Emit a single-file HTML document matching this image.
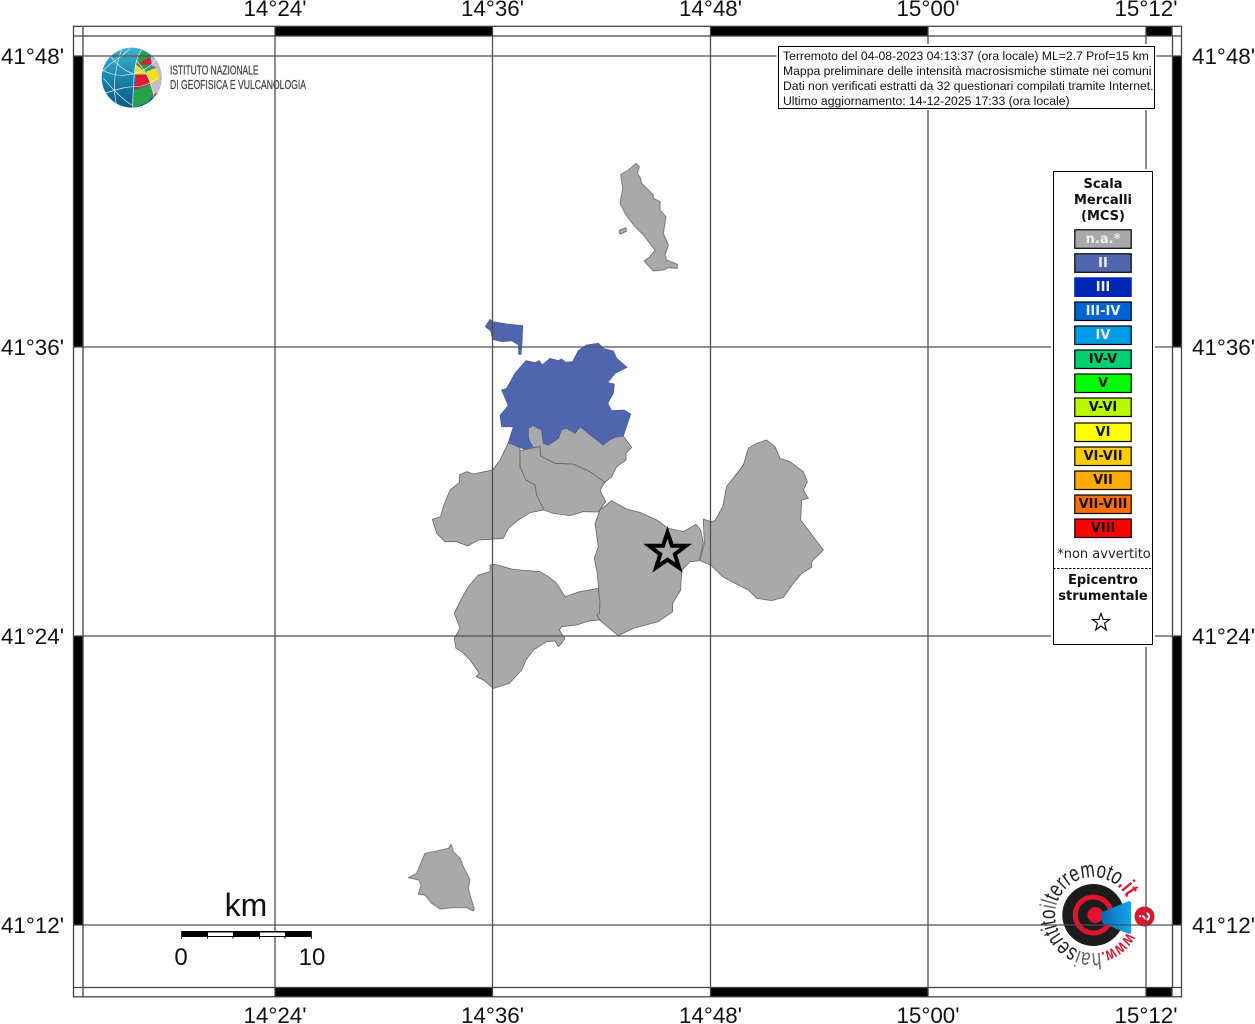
<!DOCTYPE html>
<html lang="it"><head><meta charset="utf-8"><title>Mappa</title>
<style>
html,body{margin:0;padding:0;background:#fff;overflow:hidden}
svg{display:block}
.ax{font:22.4px "Liberation Sans",sans-serif;fill:#111}
.lg{font:bold 13px "DejaVu Sans",sans-serif;text-anchor:middle}
.tb{font:12.2px "Liberation Sans",sans-serif;fill:#111}
</style></head><body>
<svg width="1255" height="1024" viewBox="0 0 1255 1024" xmlns="http://www.w3.org/2000/svg">
<defs>
<linearGradient id="gb" x1="0" y1="0" x2="0" y2="1"><stop offset="0" stop-color="#43b4d0"/><stop offset=".55" stop-color="#1680a8"/><stop offset="1" stop-color="#0c5580"/></linearGradient>
<linearGradient id="cone" x1="0" y1="0" x2="1" y2="0"><stop offset="0" stop-color="#0a66b8"/><stop offset="1" stop-color="#12a8ea"/></linearGradient>
<filter id="soft" x="-5%" y="-5%" width="110%" height="110%"><feGaussianBlur stdDeviation="0.35"/></filter>
<clipPath id="gc"><circle cx="215" cy="188" r="90"/></clipPath>
<clipPath id="tc"><rect x="779" y="47" width="375" height="61"/></clipPath>
<path id="cir" d="M1127 932.200A38 38 0 1 1 1127.500 899"/>
</defs>

<!-- INGV logo -->
<g transform="translate(60,15) scale(.33333)">
<g clip-path="url(#gc)">
<rect x="120" y="95" width="190" height="190" fill="url(#gb)"/>
<path d="M228 135L245 105 272 122 232 150Z" fill="#2f9e44"/>
<path d="M232 150L270 125 276 152 250 155Z" fill="#d81e3a"/>
<path d="M225 145L255 172 258 178 225 178Z" fill="#f2e21a"/>
<path d="M240 148L276 152 255 170Z" fill="#2f9e44"/>
<path d="M258 170L290 158 300 190 272 208Z" fill="#efe020"/>
<path d="M222 222L228 180 258 178 272 208Z" fill="#dc1c34"/>
<path d="M220 225L272 208 282 238 262 262 218 280Z" fill="#27a04c"/>
<path d="M272 122L310 150 310 195 298 190 290 158 276 152Z" fill="#c9b9cc"/>
<path d="M272 208L300 190 310 200 290 245 282 238Z" fill="#c9b9cc"/>
<path d="M282 238L292 232 280 250Z" fill="#d81e3a"/>
<g fill="none" stroke="#e8f3f6" stroke-width="2">
<path d="M128 165C160 185 200 185 240 170 265 160 285 140 290 130"/>
<path d="M135 235C165 225 195 215 225 215 250 215 270 205 295 190"/>
<path d="M150 120C165 145 195 170 225 178"/>
<path d="M185 103C175 130 170 150 165 185 160 215 165 250 170 272"/>
<path d="M245 105C225 130 222 175 220 225 218 250 218 265 218 282"/>
<path d="M130 190C150 210 170 240 215 270"/>
<path d="M210 100C190 125 150 140 128 170"/>
<path d="M228 135C245 155 265 180 272 208 278 225 282 240 282 250"/>
</g>
</g>
</g>
<g font-family="'Liberation Sans',sans-serif" fill="#444" stroke="#444" stroke-width=".25" font-size="12.5">
<text x="170" y="74.500" textLength="88.500" lengthAdjust="spacingAndGlyphs">ISTITUTO NAZIONALE</text>
<text x="170" y="89" textLength="136" lengthAdjust="spacingAndGlyphs">DI GEOFISICA E VULCANOLOGIA</text>
</g>

<!-- regions -->
<g stroke="#666" stroke-width="2.400" stroke-linejoin="round" filter="url(#soft)">
<g transform="translate(420,310) scale(.33333)" fill="#a9a9a9">
<path d="M265 398L300 413 300 470 318 510 345 525 350 555 372 600 330 608 295 630 265 655 250 685 210 688 175 690 143 708 110 695 75 695 50 670 37 628 62 620 70 590 90 540 118 518 118 495 140 485 160 492 218 480 240 450Z"/>
<path d="M300 422L360 410 362 438 405 460 460 462 510 485 555 517 540 540 557 575 535 606 490 605 450 617 400 610 372 600 350 555 345 525 318 510 300 470Z"/>
<path d="M325 355L340 347 365 360 370 400 385 405 415 385 425 358 440 355 465 370 480 350 550 405 568 390 590 380 610 378 635 412 618 430 618 450 590 470 575 500 555 517 510 485 460 462 405 460 362 438 360 410 338 412 325 385Z"/>
</g>
<g transform="translate(420,310) scale(.33333)" fill="#5066ae" stroke="#4a5f9f">
<path d="M318 152L345 158 358 152 366 165 390 145 415 152 425 147 437 157 458 155 475 122 500 105 535 100 550 115 580 123 590 145 621 172 585 190 563 218 583 222 580 250 563 280 575 302 612 300 632 312 610 378 590 380 568 390 550 405 480 350 465 370 440 355 425 358 415 385 385 405 370 400 365 360 340 347 325 355 325 385 338 412 315 418 265 398 280 350 245 350 240 316 265 287 245 240 260 235 285 190Z"/>
<path d="M210 28L218 35 260 42 308 47 306 100 303 133 296 133 296 105 275 92 245 95 218 88 212 62 196 50Z"/>
</g>
<g transform="translate(590,430) scale(.33333)" fill="#a9a9a9">
<path d="M65 212L110 237 150 247 200 270 235 295 280 305 318 283 332 300 340 340 327 392 300 395 275 422 272 480 248 520 248 545 205 575 130 595 85 617 40 580 20 560 30 530 22 430 13 385 25 350 15 280 30 240Z"/>
<path d="M340 267L362 275 375 272 398 230 410 170 460 105 475 55 500 40 530 30 555 50 570 85 600 95 640 125 652 155 640 180 655 205 635 210 632 270 700 360 665 395 665 412 635 430 610 460 580 502 545 512 500 505 475 480 425 455 398 440 362 405 330 392 343 340Z"/>
</g>
<g transform="translate(440,555) scale(.33333)" fill="#a9a9a9">
<path d="M150 30L165 28 215 42 240 45 300 50 325 65 350 85 375 125 420 110 475 100 480 140 478 175 470 180 480 195 450 197 410 210 365 215 358 225 375 250 365 265 355 275 345 258 320 260 280 285 258 315 245 345 208 385 160 400 130 375 108 365 118 355 90 315 65 290 48 280 43 250 60 220 43 175 65 130 85 95 115 60 150 50Z"/>
</g>
<g transform="translate(600,155) scale(.33333)" fill="#a9a9a9">
<path d="M108 25L118 35 112 55 122 70 125 85 160 120 160 130 180 140 180 165 198 185 190 235 205 270 195 300 200 315 232 328 232 340 205 338 190 345 160 348 132 318 150 305 165 285 130 240 105 215 78 180 60 145 68 100 62 58 85 45Z"/>
<path d="M58 225L78 218 80 228 62 237 58 235Z"/>
</g>
<g transform="translate(395,835) scale(.33333)" fill="#a9a9a9">
<path d="M168 28L175 50 195 70 205 95 220 125 225 135 220 160 225 180 238 222 235 228 215 218 175 218 135 222 110 205 90 180 70 178 78 150 72 135 40 128 65 115 75 90 90 55 125 48 150 42 160 40Z"/>
</g>
</g>

<!-- hai sentito logo -->
<circle cx="1093.300" cy="915" r="31" fill="#1c1c1c"/>
<circle cx="1093.300" cy="915" r="18" fill="none" stroke="#e2142d" stroke-width="5"/>
<circle cx="1095.500" cy="915" r="8" fill="#e2142d"/>
<path d="M1102 912L1129 901 1131 902 1131 933 1129 934 1102 923Z" fill="url(#cone)"/>
<circle cx="1144.500" cy="916.500" r="10" fill="#e2142d"/>
<text x="1144.500" y="922" font-family="'Liberation Sans',sans-serif" font-weight="bold" font-size="16" fill="#fff" text-anchor="middle" transform="rotate(90 1144.500 916.500)">?</text>
<text font-family="'Liberation Sans',sans-serif" font-size="23" fill="#222"><textPath href="#cir" textLength="202" lengthAdjust="spacingAndGlyphs"><tspan fill="#e2142d" font-weight="bold" font-size="18">www.</tspan><tspan fill="#666">hai</tspan>sentito<tspan fill="#666">il</tspan>terremoto<tspan fill="#e2142d" font-weight="bold">.it</tspan></textPath></text>

<!-- grid -->
<g stroke="#505050" stroke-width="1.3" fill="none">
<path d="M275 36V987M492.500 36V987M710.500 36V987M928 36V987M1146 36V987"/>
<path d="M83 56H1172M83 347H1172M83 636H1172M83 925H1172"/>
</g>

<!-- frame -->
<g fill="#000">
<rect x="275" y="26" width="217.500" height="10"/><rect x="710.500" y="26" width="217.500" height="10"/><rect x="1146" y="26" width="26" height="10"/>
<rect x="275" y="987.500" width="217.500" height="9.500"/><rect x="710.500" y="987.500" width="217.500" height="9.500"/><rect x="1146" y="987.500" width="26" height="9.500"/>
<rect x="73.500" y="56" width="9.500" height="291"/><rect x="73.500" y="636" width="9.500" height="289"/>
<rect x="1172" y="56" width="9.500" height="291"/><rect x="1172" y="636" width="9.500" height="289"/>
</g>
<g stroke="#444" stroke-width="1.3" fill="none">
<rect x="73.500" y="26.300" width="1108" height="970.500"/>
<rect x="83" y="36" width="1089.500" height="951.500"/>
<path d="M73.500 36H83M73.500 987.500H83M1172 36H1181.500M1172 987.500H1181.500M83 26V36M83 987V997M1172 26V36M1172 987V997"/>
<path d="M73.500 56H83M73.500 347H83M73.500 636H83M73.500 925H83M1172 56H1181.500M1172 347H1181.500M1172 636H1181.500M1172 925H1181.500M275 26V36M492.500 26V36M710.500 26V36M928 26V36M1146 26V36M275 987V997M492.500 987V997M710.500 987V997M928 987V997M1146 987V997"/>
</g>

<!-- axis labels -->
<g text-anchor="middle">
<text class="ax" x="275" y="16">14°24'</text><text class="ax" x="492.500" y="16">14°36'</text><text class="ax" x="710.500" y="16">14°48'</text><text class="ax" x="928" y="16">15°00'</text><text class="ax" x="1146" y="16">15°12'</text>
<text class="ax" x="275" y="1023">14°24'</text><text class="ax" x="492.500" y="1023">14°36'</text><text class="ax" x="710.500" y="1023">14°48'</text><text class="ax" x="928" y="1023">15°00'</text><text class="ax" x="1146" y="1023">15°12'</text>
</g>
<g text-anchor="end">
<text class="ax" x="64" y="64">41°48'</text><text class="ax" x="64" y="355">41°36'</text><text class="ax" x="64" y="644">41°24'</text><text class="ax" x="64" y="933">41°12'</text>
</g>
<text class="ax" x="1192" y="64">41°48'</text><text class="ax" x="1192" y="355">41°36'</text><text class="ax" x="1192" y="644">41°24'</text><text class="ax" x="1192" y="933">41°12'</text>

<!-- star -->
<polygon points="667.500,532.500 672,545.700 686,545.700 674.800,554.300 679,567.700 667.500,559.700 656,567.700 660.200,554.300 649,545.700 663,545.700" fill="none" stroke="#000" stroke-width="4" stroke-miterlimit="6"/>

<!-- scale bar -->
<g>
<rect x="181" y="931" width="131" height="6" fill="#000"/>
<rect x="208" y="932.500" width="25" height="3.500" fill="#fff"/>
<rect x="260" y="932.500" width="25" height="3.500" fill="#fff"/>
<path d="M181.500 931V939M311.500 931V939M207.500 937V939M233 937V939M259.500 937V939M285 937V939" stroke="#333" stroke-width="1"/>
<g font-family="'Liberation Sans',sans-serif" fill="#111" text-anchor="middle">
<text x="246" y="916" font-size="32">km</text>
<text x="181" y="965" font-size="24">0</text>
<text x="312" y="965" font-size="24">10</text>
</g>
</g>

<!-- title box -->
<rect x="776.500" y="44" width="380" height="66" fill="#fff"/>
<rect x="778.500" y="46.500" width="376" height="62" fill="#fff" stroke="#000" stroke-width="1"/>
<g clip-path="url(#tc)">
<text class="tb" x="783" y="60">Terremoto del 04-08-2023 04:13:37 (ora locale) ML=2.7 Prof=15 km</text>
<text class="tb" x="783" y="75">Mappa preliminare delle intensità macrosismiche stimate nei comuni</text>
<text class="tb" x="783" y="90">Dati non verificati estratti da 32 questionari compilati tramite Internet.</text>
<text class="tb" x="783" y="105">Ultimo aggiornamento: 14-12-2025 17:33 (ora locale)</text>
</g>

<!-- legend -->
<rect x="1051" y="169" width="104" height="478" fill="#fff"/>
<rect x="1053.500" y="171.500" width="99" height="473" fill="#fff" stroke="#000" stroke-width="1"/>
<g fill="#111">
<text class="lg" x="1103" y="188">Scala</text>
<text class="lg" x="1103" y="204">Mercalli</text>
<text class="lg" x="1103" y="220">(MCS)</text>
</g>
<g stroke="#000" stroke-width="1.2">
<rect x="1074.800" y="229.800" width="56.400" height="18.500" fill="#a9a9a9"/>
<rect x="1074.800" y="253.800" width="56.400" height="18.500" fill="#5066ae"/>
<rect x="1074.800" y="277.900" width="56.400" height="18.500" fill="#0028b8" stroke="#0028b8"/>
<rect x="1074.800" y="302" width="56.400" height="18.500" fill="#0064d2"/>
<rect x="1074.800" y="326" width="56.400" height="18.500" fill="#009be6"/>
<rect x="1074.800" y="350" width="56.400" height="18.500" fill="#00d070"/>
<rect x="1074.800" y="374" width="56.400" height="18.500" fill="#00ff00"/>
<rect x="1074.800" y="398" width="56.400" height="18.500" fill="#b9f900"/>
<rect x="1074.800" y="423" width="56.400" height="18.500" fill="#ffff00"/>
<rect x="1074.800" y="447" width="56.400" height="18.500" fill="#ffcc00"/>
<rect x="1074.800" y="471" width="56.400" height="18.500" fill="#ffaa00"/>
<rect x="1074.800" y="495" width="56.400" height="18.500" fill="#ff6e00"/>
<rect x="1074.800" y="519" width="56.400" height="18.500" fill="#ff0000"/>
</g>
<g fill="#eee">
<text class="lg" x="1103" y="243">n.a.*</text>
<text class="lg" x="1103" y="267">II</text>
<text class="lg" x="1103" y="291">III</text>
<text class="lg" x="1103" y="315">III-IV</text>
<text class="lg" x="1103" y="339">IV</text>
</g>
<g fill="#111">
<text class="lg" x="1103" y="363">IV-V</text>
<text class="lg" x="1103" y="387">V</text>
<text class="lg" x="1103" y="411">V-VI</text>
<text class="lg" x="1103" y="436">VI</text>
<text class="lg" x="1103" y="460">VI-VII</text>
<text class="lg" x="1103" y="484">VII</text>
<text class="lg" x="1103" y="508">VII-VIII</text>
<text class="lg" x="1103" y="532">VIII</text>
</g>
<text x="1104" y="558" font-family="'DejaVu Sans',sans-serif" font-size="13" fill="#222" text-anchor="middle">*non avvertito</text>
<path d="M1053 568.500H1151" stroke="#000" stroke-width="1" stroke-dasharray="2.500 1.500"/>
<text class="lg" x="1103" y="584" fill="#111">Epicentro</text>
<text class="lg" x="1103" y="600" fill="#111">strumentale</text>
<polygon points="1101,613.500 1103.200,619.500 1109.500,619.500 1104.500,623.300 1106.300,630 1101,626 1095.700,630 1097.500,623.300 1092.500,619.500 1098.800,619.500" fill="#fff" stroke="#000" stroke-width="1.100"/>
</svg>
</body></html>
